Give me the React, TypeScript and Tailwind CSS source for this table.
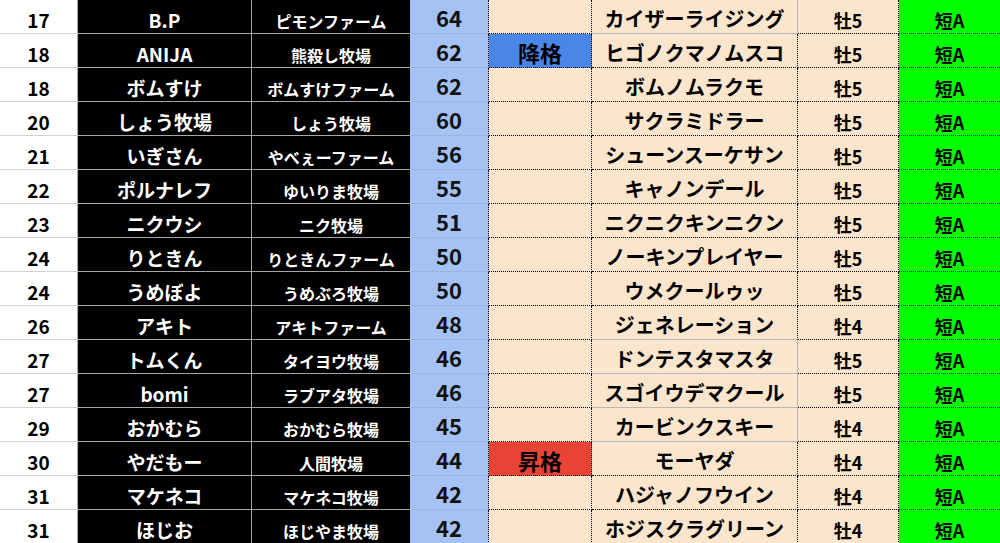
import React from "react";

type Row = {
  rank: string;
  owner: string;
  farm: string;
  pt: string;
  tag?: "down" | "up";
  horse: string;
  sex: string;
};

const rows: Row[] = [
  { rank: "17", owner: "B.P", farm: "ピモンファーム", pt: "64", horse: "カイザーライジング", sex: "牡5" },
  { rank: "18", owner: "ANIJA", farm: "熊殺し牧場", pt: "62", tag: "down", horse: "ヒゴノクマノムスコ", sex: "牡5" },
  { rank: "18", owner: "ボムすけ", farm: "ボムすけファーム", pt: "62", horse: "ボムノムラクモ", sex: "牡5" },
  { rank: "20", owner: "しょう牧場", farm: "しょう牧場", pt: "60", horse: "サクラミドラー", sex: "牡5" },
  { rank: "21", owner: "いぎさん", farm: "やべぇーファーム", pt: "56", horse: "シューンスーケサン", sex: "牡5" },
  { rank: "22", owner: "ポルナレフ", farm: "ゆいりま牧場", pt: "55", horse: "キャノンデール", sex: "牡5" },
  { rank: "23", owner: "ニクウシ", farm: "ニク牧場", pt: "51", horse: "ニクニクキンニクン", sex: "牡5" },
  { rank: "24", owner: "りときん", farm: "りときんファーム", pt: "50", horse: "ノーキンプレイヤー", sex: "牡5" },
  { rank: "24", owner: "うめぼよ", farm: "うめぶろ牧場", pt: "50", horse: "ウメクールゥッ", sex: "牡5" },
  { rank: "26", owner: "アキト", farm: "アキトファーム", pt: "48", horse: "ジェネレーション", sex: "牡4" },
  { rank: "27", owner: "トムくん", farm: "タイヨウ牧場", pt: "46", horse: "ドンテスタマスタ", sex: "牡5" },
  { rank: "27", owner: "bomi", farm: "ラブアタ牧場", pt: "46", horse: "スゴイウデマクール", sex: "牡5" },
  { rank: "29", owner: "おかむら", farm: "おかむら牧場", pt: "45", horse: "カービンクスキー", sex: "牡4" },
  { rank: "30", owner: "やだもー", farm: "人間牧場", pt: "44", tag: "up", horse: "モーヤダ", sex: "牡4" },
  { rank: "31", owner: "マケネコ", farm: "マケネコ牧場", pt: "42", horse: "ハジャノフウイン", sex: "牡4" },
  { rank: "31", owner: "ほじお", farm: "ほじやま牧場", pt: "42", horse: "ホジスクラグリーン", sex: "牡4" },
];

// horse cells that have no explicit border (plain gridlines show)
const plainRight = [0, 10, 11, 12];
const plainBottom = [0, 9, 10, 11, 12];

const cell = "flex items-end justify-center leading-none shrink-0";

export default function App() {
  return (
    <div
      className="w-[1000px] h-[543px] overflow-hidden bg-white font-bold"
      style={{ fontFamily: '"Noto Sans CJK JP", "Noto Sans", sans-serif' }}
    >
      {rows.map((r, i) => (
        <div key={i} className="flex h-[34px]">
          <div className={`${cell} w-[78px] pb-[4px] text-[19px] text-black border-r border-b border-r-[#b0b0b0] border-b-[#d4d4d4]`}>
            {r.rank}
          </div>
          <div className={`${cell} w-[174px] pb-[4px] text-[19px] text-white bg-black border-r border-b border-[#a6a6a6]`}>
            {r.owner}
          </div>
          <div className={`${cell} w-[158px] pb-[4px] text-[16px] text-white bg-black border-b border-[#a6a6a6]`}>
            {r.farm}
          </div>
          <div className={`${cell} w-[79px] pb-[5px] text-[22px] text-[#111] bg-[#a4c2f4] border-b border-b-[#97a6c0] border-r border-dotted border-r-black`}>
            {r.pt}
          </div>
          <div
            className={`${cell} w-[103px] pb-[4px] text-[22px] text-black border-r border-b border-dotted border-black ${
              r.tag === "down" ? "bg-[#4a86e8]" : r.tag === "up" ? "bg-[#e94335]" : "bg-[#fce5cd]"
            }`}
          >
            {r.tag === "down" ? "降格" : r.tag === "up" ? "昇格" : ""}
          </div>
          <div
            className={`${cell} w-[206px] pb-[4px] text-[20px] text-black bg-[#fce5cd] border-r border-b ${
              plainRight.includes(i) ? "border-r-[#b8b8b8]" : "border-r-black"
            } ${plainBottom.includes(i) ? "border-b-[#b8b8b8]" : "border-b-black"}`}
            style={{
              borderRightStyle: plainRight.includes(i) ? "solid" : "dotted",
              borderBottomStyle: plainBottom.includes(i) ? "solid" : "dotted",
            }}
          >
            {r.horse}
          </div>
          <div className={`${cell} w-[101px] pb-[4px] text-[18px] text-black bg-[#fce5cd] border-r border-b border-dotted border-black`}>
            {r.sex}
          </div>
          <div className={`${cell} w-[101px] pb-[4px] text-[18px] text-black bg-[#00ff00] border-b border-dotted border-black`}>
            短A
          </div>
        </div>
      ))}
    </div>
  );
}
